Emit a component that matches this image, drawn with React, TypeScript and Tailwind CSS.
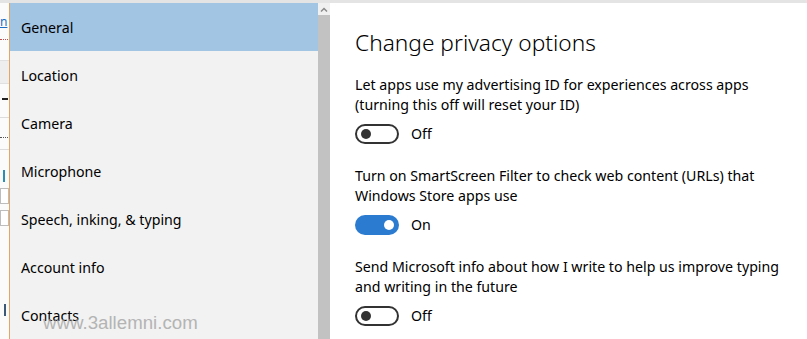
const items = [
  'General',
  'Location',
  'Camera',
  'Microphone',
  'Speech, inking, & typing',
  'Account info',
  'Contacts',
];

const options = [
  {
    text: ['Let apps use my advertising ID for experiences across apps', '(turning this off will reset your ID)'],
    on: false,
  },
  {
    text: ['Turn on SmartScreen Filter to check web content (URLs) that', 'Windows Store apps use'],
    on: true,
  },
  {
    text: ['Send Microsoft info about how I write to help us improve typing', 'and writing in the future'],
    on: false,
  },
];

function Toggle({ on }: { on: boolean }) {
  if (on) {
    return (
      <div className="w-[44px] h-[20px] rounded-full bg-[#2b7bd0] flex items-center justify-end pr-[5px]">
        <div className="w-[10px] h-[10px] rounded-full bg-white" />
      </div>
    );
  }
  return (
    <div className="w-[44px] h-[20px] rounded-full border-2 border-[#333] flex items-center pl-[4px]">
      <div className="w-[10px] h-[10px] rounded-full bg-[#333]" />
    </div>
  );
}

function BackWindow() {
  return (
    <div className="w-[9px] bg-[#fbfbfb] flex flex-col overflow-hidden">
      <div className="h-[13px]" />
      <div className="h-[12px] text-[12px] leading-[12px] text-[#1a6fc4] underline">n</div>
      <div className="h-[10px]" />
      <div className="h-[2px] w-[8px] border-b border-dotted border-[#c0504d]" />
      <div className="h-[20px]" />
      <div className="h-[24px] bg-[#eeeeee] border-y border-[#e0e0e0]" />
      <div className="h-[14px]" />
      <div className="h-[8px] w-[6px] ml-[2px] border-t-2 border-[#222]" />
      <div className="h-[12px] border-b border-[#dcdcdc]" />
      <div className="h-[10px]" />
      <div className="h-[10px] w-[8px] border-b border-dotted border-[#555]" />
      <div className="h-[12px] border-b border-[#dcdcdc]" />
      <div className="h-[20px]" />
      <div className="h-[12px] w-[2px] ml-[3px] bg-[#2a8fb4]" />
      <div className="h-[6px]" />
      <div className="h-[16px] border border-[#bdbdbd] bg-white" />
      <div className="h-[6px]" />
      <div className="h-[16px] border border-[#bdbdbd] bg-white" />
      <div className="h-[78px]" />
      <div className="h-[12px] w-[2px] ml-[4px] bg-[#3a5a78]" />
    </div>
  );
}

export default function App() {
  return (
    <div
      className="w-[807px] h-[339px] bg-white flex flex-col overflow-hidden relative"
      style={{ fontFamily: '"Noto Sans", "Open Sans", sans-serif' }}
    >
      <div className="h-[3px] bg-[#e4e4e4] shrink-0" />
      <div className="flex flex-1 min-h-0">
        <BackWindow />
        <div className="w-px bg-[#e6a464]" />
        <div className="w-[308px] bg-[#f2f2f2] flex flex-col">
          {items.map((item, i) => (
            <div
              key={item}
              className={`h-[48px] shrink-0 flex items-center pl-[11px] pt-[2px] text-[14.2px] text-black ${
                i === 0 ? 'bg-[#a3c5e4]' : ''
              }`}
            >
              {item}
            </div>
          ))}
        </div>
        <div className="w-[12px] flex flex-col">
          <div className="h-[12px] bg-[#f0f0f0] flex items-center justify-center">
            <svg width="8" height="5" viewBox="0 0 8 5">
              <path d="M1 4.5 L4 1.5 L7 4.5" fill="none" stroke="#8a8a8a" strokeWidth="1.5" />
            </svg>
          </div>
          <div className="flex-1 bg-[#c2c2c2]" />
        </div>
        <div className="flex-1 pl-[25px] pt-[25px]">
          <h1 className="text-[22.7px] leading-[30px] font-light text-black mb-[17px]">Change privacy options</h1>
          {options.map((opt, i) => (
            <div key={i} className="mb-[22px]">
              <div className="text-[14.2px] leading-[20px] text-black">
                {opt.text[0]}
                <br />
                {opt.text[1]}
              </div>
              <div className="flex items-center gap-[12px] mt-[9px] h-[20px]">
                <Toggle on={opt.on} />
                <span className="text-[14.2px] text-black">{opt.on ? 'On' : 'Off'}</span>
              </div>
            </div>
          ))}
        </div>
      </div>
      <div
        className="absolute left-[43px] top-[310px] text-[18.7px] leading-[26px] text-[#9a9a9a] opacity-70"
        style={{ fontFamily: '"Liberation Sans", Arial, sans-serif' }}
      >
        www.3allemni.com
      </div>
    </div>
  );
}
